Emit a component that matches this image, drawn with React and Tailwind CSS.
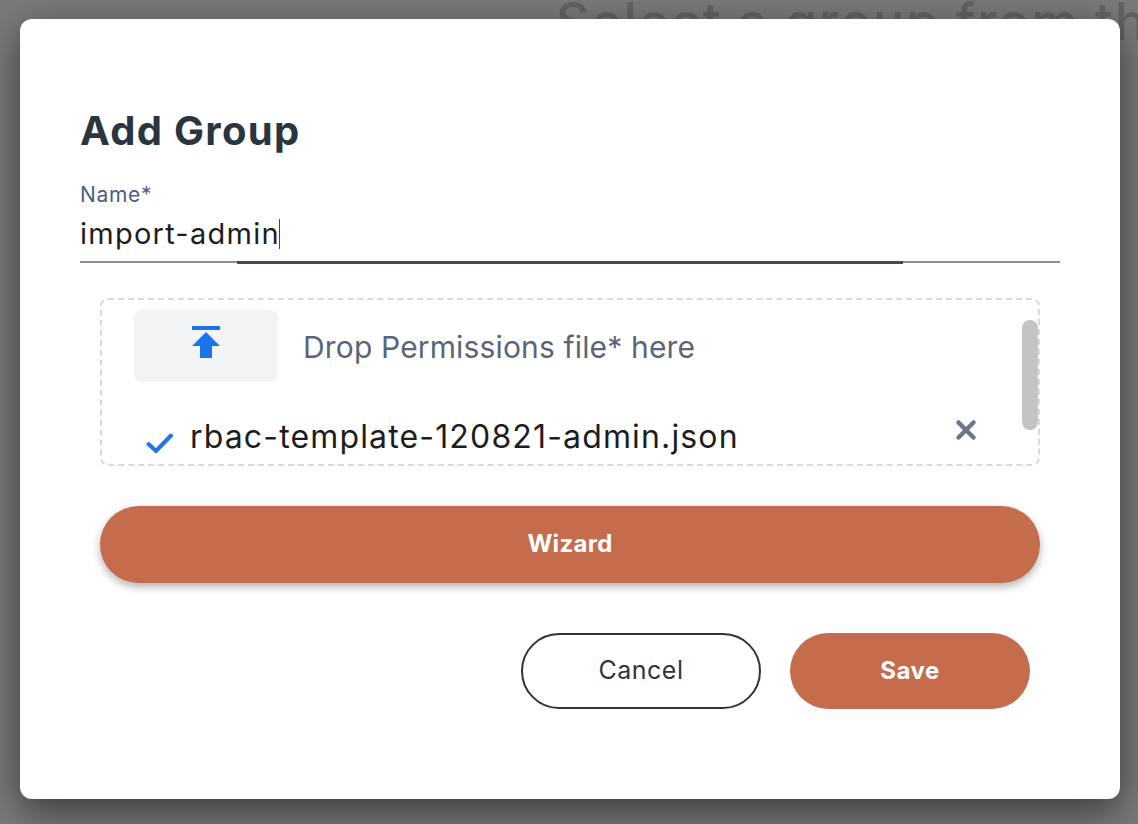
import { X } from "lucide-react";

function UploadIcon() {
  return (
    <svg width="28" height="32" viewBox="0 0 28 32" fill="#1a73f0">
      <rect x="0" y="0" width="28" height="4" />
      <path d="M14 6 L28 20 H20 V32 H8 V20 H0 Z" />
    </svg>
  );
}

function CheckIcon() {
  return (
    <svg width="28" height="22" viewBox="0 0 28 22" fill="none" stroke="#1f74e8" strokeWidth="4" strokeLinecap="round" strokeLinejoin="round">
      <path d="M2.500 12 L10 19 L25 3.500" />
    </svg>
  );
}

export default function App() {
  return (
    <div className="relative h-[824px] w-full overflow-hidden bg-[#7b7b7b] font-['Inter',sans-serif]">
      {/* page behind the dialog */}
      <div className="pl-[556px]">
        <h1 className="mt-[-14px] whitespace-nowrap text-[52px] font-medium leading-[72px] tracking-[1.800px] text-[#636467]">
          Select a group from the list
        </h1>
      </div>

      {/* dialog */}
      <div className="absolute left-[20px] top-[19px] flex h-[780px] w-[1100px] flex-col rounded-[12px] bg-white px-[60px] pt-[87px] shadow-[0_12px_40px_rgba(0,0,0,0.55)]">
        <h2 className="text-[40px] font-bold leading-[50px] tracking-[1.300px] text-[#29363f]">Add Group</h2>

        <label className="mt-[26px] text-[21px] font-normal leading-[26px] tracking-[0.7px] text-[#4c5f7c]">Name*</label>
        <div className="relative h-[55px] border-b-2 border-[#8f8f8f]">
          <div className="mt-[6px] flex h-[40px] items-center text-[29px] leading-[40px] tracking-[1.250px] text-[#1d1d20]">
            import-admin
            <span className="ml-[-1px] h-[30px] w-[1.500px] bg-[#33475f]" />
          </div>
          <div className="absolute bottom-[-3px] left-[157px] h-[3px] w-[666px] bg-[#454a52]" />
        </div>

        <div className="relative mx-[20px] mt-[35px] h-[168px] overflow-hidden rounded-[8px] border-2 border-dashed border-[#d5d9e0]">
          <div className="flex items-center pl-[32px] pt-[10px]">
            <div className="flex h-[72px] w-[144px] items-center justify-center rounded-[8px] bg-[#f3f4f6]">
              <span className="mb-[8px]"><UploadIcon /></span>
            </div>
            <span className="ml-[25px] mt-[2px] text-[30px] leading-[40px] tracking-[0.150px] text-[#5a6577]">Drop Permissions file* here</span>
          </div>
          <div className="relative mt-[33px] flex items-center pl-[44px]">
            <span className="mt-[12px]"><CheckIcon /></span>
            <span className="ml-[16px] whitespace-nowrap text-[32px] leading-[44px] tracking-[1.150px] text-[#1d1d20]">rbac-template-120821-admin.json</span>
            <X className="absolute left-[849px] top-[0px] text-[#6b7688]" size={30} strokeWidth={3.6} />
          </div>
          <div className="absolute right-[0px] top-[20px] h-[110px] w-[16px] rounded-full bg-[#c4c4c4]" />
        </div>

        <button className="mx-[20px] mt-[40px] h-[77px] rounded-full bg-[#c56c4d] pb-[2px] text-[24px] font-bold tracking-[0.3px] text-white shadow-[0_4px_8px_rgba(0,0,0,0.3)]">
          Wizard
        </button>

        <div className="mt-[50px] flex justify-end gap-[29px] pr-[30px]">
          <button className="h-[76px] w-[240px] rounded-full border-2 border-[#2b3640] text-[25px] font-normal tracking-[0.5px] text-[#2b3640]">Cancel</button>
          <button className="h-[76px] w-[240px] rounded-full bg-[#c56c4d] text-[24px] font-bold tracking-[0.5px] text-white">Save</button>
        </div>
      </div>
    </div>
  );
}
